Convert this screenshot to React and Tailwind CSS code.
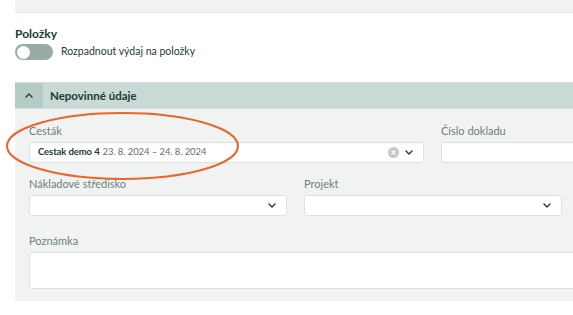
import React from 'react';

function Chevron({ className }) {
  return (
    <svg className={className} width="8" height="5" viewBox="0 0 8 5" fill="none">
      <path d="M1 1l3 3 3-3" stroke="#1d3b34" strokeWidth="1.4" strokeLinecap="round" strokeLinejoin="round" />
    </svg>
  );
}

function Field({ label, width, height = 'h-[21px]', children }) {
  return (
    <div className="flex flex-col shrink-0" style={{ width }}>
      <div className="text-[11px] leading-[14px] text-[#6e7f7a] mb-[4px]">{label}</div>
      <div className={`${height} bg-white border border-[#dde2e0] rounded-[3px] flex items-center px-2`}>
        {children}
      </div>
    </div>
  );
}

export default function App() {
  return (
    <div className="w-[573px] h-[315px] overflow-hidden bg-white relative" style={{ fontFamily: 'Lato, "Noto Sans", sans-serif' }}>
      <div className="ml-[15px] w-[700px]">
        <div className="h-[13px] bg-[#f1f3f2] border-b border-[#e6eae8]" />

        <div className="pt-[14px] text-[12px] font-bold leading-[14px] text-[#1d3b34]">Položky</div>
        <div className="flex items-center gap-2 mt-[3px] h-[16px]">
          <div className="w-[38px] h-[16px] rounded-full bg-[#9aaba5] flex items-center px-[2px]">
            <div className="w-[13px] h-[13px] rounded-full bg-white" />
          </div>
          <span className="text-[10.5px] text-[#1d3b34]">Rozpadnout výdaj na položky</span>
        </div>

        <div className="mt-[22px] h-[27px] bg-[#c9d9d5] flex items-center border-y border-[#d6e2df]">
          <div className="w-[28px] h-full bg-[#b7cbc6] flex items-center justify-center">
            <Chevron className="rotate-180" />
          </div>
          <span className="ml-[7px] text-[11.5px] font-bold text-[#1d3b34]">Nepovinné údaje</span>
        </div>

        <div className="bg-[#f1f3f2] h-[192px] pl-[14px] pt-[15px] flex flex-col">
          <div className="flex gap-[17px]">
            <Field label="Cesták" width="395px">
              <span className="text-[9.5px] font-bold text-[#1d3b34] tracking-[-0.1px]">Cestak demo 4</span>
              <span className="text-[9.5px] text-[#5f706b] ml-[3px] tracking-[-0.1px]">23. 8. 2024 – 24. 8. 2024</span>
              <div className="ml-auto flex items-center gap-[6px] pr-[2px]">
                <div className="w-[11px] h-[11px] rounded-full bg-[#c3c9c7] flex items-center justify-center">
                  <svg width="5" height="5" viewBox="0 0 5 5"><path d="M1 1l3 3M4 1L1 4" stroke="white" strokeWidth="1.2" strokeLinecap="round" /></svg>
                </div>
                <Chevron />
              </div>
            </Field>
            <Field label="Číslo dokladu" width="200px" />
          </div>
          <div className="flex gap-[17px] mt-[14px]">
            <Field label="Nákladové středisko" width="258px">
              <Chevron className="ml-auto mr-[2px]" />
            </Field>
            <Field label="Projekt" width="258px">
              <Chevron className="ml-auto mr-[2px]" />
            </Field>
          </div>
          <div className="mt-[18px]">
            <Field label="Poznámka" width="620px" height="h-[37px]" />
          </div>
        </div>
      </div>

      <svg className="absolute left-0 top-0 pointer-events-none" width="573" height="315">
        <ellipse cx="122.5" cy="146" rx="115.5" ry="33" fill="none" stroke="#e8662c" strokeWidth="2" />
      </svg>
    </div>
  );
}
